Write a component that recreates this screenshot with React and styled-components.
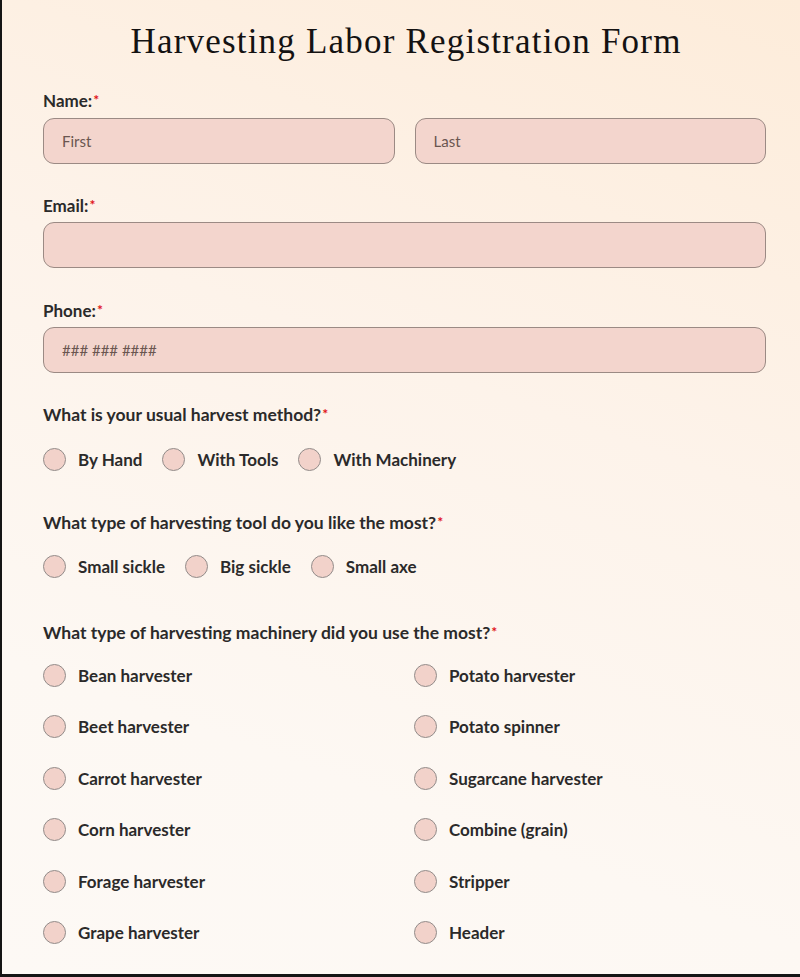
import React from 'react';
import styled, { createGlobalStyle } from 'styled-components';

const GlobalStyle = createGlobalStyle`
  html, body {
    margin: 0;
    padding: 0;
  }
  * {
    box-sizing: border-box;
  }
`;

const Page = styled.div`
  height: 977px;
  overflow: hidden;
  border-left: 2px solid #151515;
  border-bottom: 3px solid #151515;
  background: linear-gradient(200deg, #fdecda 0%, #fdf3ea 40%, #fdf8f3 75%, #fdf9f5 100%);
  padding: 22px 34px 0 41px;
  font-family: Lato, "Open Sans", sans-serif;
  color: #2b2a2a;
`;

const Title = styled.h1`
  margin: 0 0 28px;
  text-align: center;
  font-family: "Liberation Serif", "DejaVu Serif", serif;
  font-weight: 400;
  font-size: 35px;
  line-height: 40px;
  letter-spacing: 1.2px;
  color: #141212;
  padding-left: 3px;
`;

const Field = styled.div`
  margin-bottom: ${p => p.$gap || 31}px;
`;

const Label = styled.div`
  font-size: ${p => p.$size || 17}px;
  font-weight: 700;
  line-height: 20px;
  margin-bottom: ${p => p.$gap || 6}px;
  color: #2b2a2a;
`;

const Req = styled.span`
  color: #e0141a;
  font-size: 14px;
  vertical-align: 2px;
  margin-left: 1px;
`;

const Row = styled.div`
  display: flex;
  gap: 20px;
`;

const Input = styled.input`
  flex: 1;
  width: 100%;
  height: 46px;
  border: 1px solid #9b8a84;
  border-radius: 11px;
  background: #f3d5cd;
  padding: 0 18px;
  font-family: Lato, sans-serif;
  font-size: 15px;
  color: #3a2e2b;
  outline: none;
  &::placeholder {
    color: #6a5650;
  }
`;

const Inline = styled.div`
  display: flex;
  align-items: center;
`;

const Grid = styled.div`
  display: grid;
  grid-template-columns: 371px 1fr;
  row-gap: 27.6px;
`;

const Option = styled.label`
  display: flex;
  align-items: center;
  height: 24px;
  margin-right: ${p => p.$spacing || 0}px;
  font-size: 17px;
  font-weight: 700;
  color: #2b2a2a;
`;

const Circle = styled.span`
  width: 23px;
  height: 23px;
  border-radius: 50%;
  border: 1.5px solid #928c8a;
  background: #f2d2ca;
  margin-right: 12px;
  flex-shrink: 0;
`;

const Radio = ({ label, spacing }) => (
  <Option $spacing={spacing}>
    <Circle />
    {label}
  </Option>
);

const methods = ['By Hand', 'With Tools', 'With Machinery'];
const tools = ['Small sickle', 'Big sickle', 'Small axe'];
const machines = [
  'Bean harvester', 'Potato harvester',
  'Beet harvester', 'Potato spinner',
  'Carrot harvester', 'Sugarcane harvester',
  'Corn harvester', 'Combine (grain)',
  'Forage harvester', 'Stripper',
  'Grape harvester', 'Header',
];

export default function App() {
  return (
    <>
      <GlobalStyle />
      <Page>
        <Title>Harvesting Labor Registration Form</Title>

        <Field>
          <Label $gap={7}>Name:<Req>*</Req></Label>
          <Row>
            <Input placeholder="First" />
            <Input placeholder="Last" />
          </Row>
        </Field>

        <Field $gap={32}>
          <Label>Email:<Req>*</Req></Label>
          <Input />
        </Field>

        <Field $gap={31}>
          <Label>Phone:<Req>*</Req></Label>
          <Input placeholder="### ### ####" />
        </Field>

        <Field $gap={41}>
          <Label $gap={22} $size={17.5}>What is your usual harvest method?<Req>*</Req></Label>
          <Inline>
            {methods.map(m => <Radio key={m} label={m} spacing={20} />)}
          </Inline>
        </Field>

        <Field $gap={44}>
          <Label $gap={21} $size={17.5}>What type of harvesting tool do you like the most?<Req>*</Req></Label>
          <Inline>
            {tools.map(t => <Radio key={t} label={t} spacing={20} />)}
          </Inline>
        </Field>

        <Field>
          <Label $gap={20} $size={17.5}>What type of harvesting machinery did you use the most?<Req>*</Req></Label>
          <Grid>
            {machines.map(m => <Radio key={m} label={m} />)}
          </Grid>
        </Field>
      </Page>
    </>
  );
}
